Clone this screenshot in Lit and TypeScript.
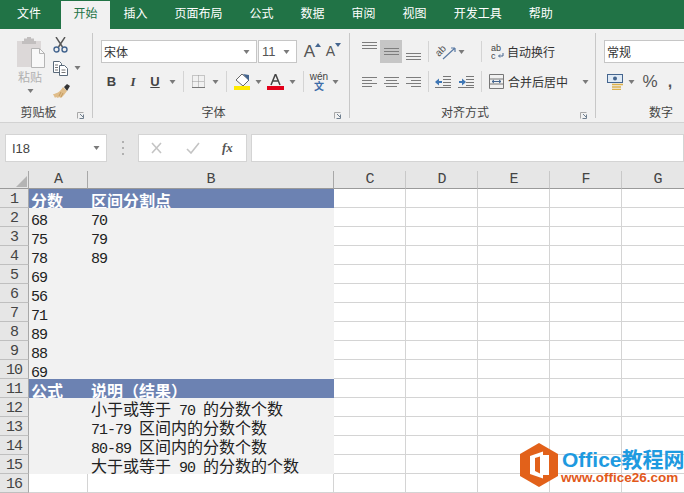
import { LitElement, html, svg, css } from "lit";
import { customElement } from "lit/decorators.js";

const TABS = ["文件", "开始", "插入", "页面布局", "公式", "数据", "审阅", "视图", "开发工具", "帮助"];
const COLS = ["A", "B", "C", "D", "E", "F", "G"];
const DATA: Record<number, [string, string]> = {
  1: ["分数", "区间分割点"], 2: ["68", "70"], 3: ["75", "79"], 4: ["78", "89"], 5: ["69", ""], 6: ["56", ""],
  7: ["71", ""], 8: ["89", ""], 9: ["88", ""], 10: ["69", ""], 11: ["公式", "说明（结果）"],
  12: ["", "小于或等于 70 的分数个数"], 13: ["", "71-79 区间内的分数个数"],
  14: ["", "80-89 区间内的分数个数"], 15: ["", "大于或等于 90 的分数的个数"],
};

const caret = html`<svg class="ic" width="7" height="4" viewBox="0 0 7 4"><path d="M.5 0h6L3.5 4z" fill="#7a7a7a"/></svg>`;
const launcher = html`<svg class="ic" width="8" height="7" viewBox="0 0 8 7"><path d="M.5 6.5V.5h6" fill="none" stroke="#a8a8a8"/><path d="M3 2l3 3M6.5 2.5v4h-4" fill="none" stroke="#6f7f8f"/></svg>`;
const sep = html`<i class="sep"></i>`;

function alignIcon(ws: [number, number][], step = 4) {
  const h = step * (ws.length - 1) + 1;
  return html`<svg class="ic" width="15" height=${h} viewBox="0 0 15 ${h}">${ws.map(([x, w], i) => svg`<rect x=${x} y=${i * step} width=${w} height="1" fill="#7d7d7d"/>`)}</svg>`;
}

@customElement("app-root")
export class AppRoot extends LitElement {
  static styles = css`
    :host { display: block; width: 684px; height: 493px; overflow: hidden; position: relative; background: #fff;
      font-family: "Noto Sans CJK SC", "Liberation Sans", sans-serif; color: #333; }
    .ic { display: block; flex: none; }
    .tabs { display: flex; height: 29px; background: #217346; color: #fff; font-size: 12px; gap: 2px; padding-left: 4.5px; box-sizing: border-box; align-items: stretch; padding-top: 1px; }
    .tab { padding: 0 12.5px; line-height: 24px; white-space: nowrap; }
    .tab.first { margin-right: 5.5px; }
    .tab.on { background: #f1f1f1; color: #217346; margin-right: -1px; }
    .ribbon { height: 94px; box-sizing: border-box; background: #f1f1f1; border-bottom: 1px solid #d2d2d2; display: flex; padding: 4px 0 4px; overflow: hidden; }
    .group { flex: none; display: flex; flex-direction: column; border-right: 1px solid #c8c8c8; position: relative; }
    .g1 { width: 92px; } .g2 { width: 256px; } .g3 { width: 245px; } .g4 { width: 145px; border: 0; }
    .body { flex: 1; min-height: 0; }
    .label { height: 10px; display: flex; align-items: center; font-size: 12px; color: #444; line-height: 10px; }
    .label b { flex: 1; text-align: center; font-weight: 400; margin-top: -2px; }
    .label span { width: 15px; flex: none; padding-top: 4px; }
    .clip { display: grid; grid-template-columns: 40px 40px; padding-left: 10px; }
    .paste { display: flex; flex-direction: column; align-items: center; padding-top: 4px; color: #b0b0b0; font-size: 12px; line-height: 16px; }
    .paste svg.ic:first-child { margin-bottom: 1px; }
    .paste .ic:last-child { margin-top: 4px; }
    .small { display: grid; grid-auto-rows: 23.5px; align-items: center; padding-left: 3px; }
    .small div { display: flex; align-items: center; gap: 6px; }
    .tools { padding: 7px 0 0 8px; display: grid; grid-template-rows: 23px 23px; row-gap: 7px; align-content: start; }
    .row { display: grid; grid-template-rows: 23px; align-items: center; justify-items: center; height: 23px; }
    .r-font1 { grid-template-columns: 156px 1px 39px 7px 17px 6px 13px; }
    .r-font2 { grid-template-columns: 21px 22px 22px 12px 10px 20px 14px 8px 24px 8px 26px 8px 14px 18px 14px; }
    .r-al { grid-template-columns: 22px 22px 22px 8px 45px 8px 100px; }
    .r-al2 { grid-template-columns: 22px 22px 22px 8px 22px 23px 8px 100px; }
    .r-num { grid-template-columns: 22px 10px 28px 12px; justify-content: start; }
    .r-one { justify-items: start; }
    .combo { background: #fff; border: 1px solid #c6c6c6; box-sizing: border-box; height: 23px; width: 100%; display: flex; align-items: center; justify-content: space-between; padding: 0 6px 0 2px; font-size: 12px; }
    .combo.size { padding-left: 3px; font-family: "Liberation Sans", sans-serif; font-size: 13px; color: #555; }
    .combo.num { width: 120px; padding-left: 2px; }
    .sep { display: block; width: 1px; height: 21px; background: #d4d4d4; }
    .hi { background: #c6c6c6; width: 22px; height: 23px; display: flex; align-items: center; justify-content: center; }
    .top { align-self: start; margin-top: 2px; }
    .bot { align-self: end; margin-bottom: 3px; }
    .flow { justify-self: start; display: flex; align-items: center; font-size: 12px; color: #333; white-space: nowrap; }
    .orient { padding-left: 4px; gap: 2px; }
    .wrap { padding-left: 6px; gap: 3px; margin-top: -1px; }
    .merge { padding-left: 4px; gap: 4px; }
    .merge .ic:last-child { margin-left: 10px; }
    .bold { font: 700 13px "Liberation Sans", sans-serif; color: #444; }
    .ital { font: italic 700 13px "Liberation Serif", serif; color: #444; }
    .ul { font: 700 13px "Liberation Sans", sans-serif; color: #444; text-decoration: underline; }
    .big { display: flex; align-items: flex-start; font: 17px/17px "Liberation Sans", sans-serif; color: #555; white-space: nowrap; }
    .big.sm { font-size: 14px; }
    .wen { font: 10px/9px "Liberation Sans", sans-serif; color: #444; text-align: center; }
    .wen span { display: block; font: 700 10px/10px "Noto Sans CJK SC", sans-serif; color: #3d6da8; }
    .pct { font: 17px "Liberation Sans", sans-serif; color: #555; }
    .comma { font: 700 16px "Liberation Sans", sans-serif; color: #555; line-height: 10px; }

    .fbar { height: 48px; box-sizing: border-box; background: #e6e6e6; padding: 11px 0 0 5px; display: flex; align-items: flex-start; }
    .fbox { background: #fff; border: 1px solid #d4d4d4; box-sizing: border-box; height: 28px; display: flex; align-items: center; }
    .name { width: 102px; padding: 0 6px; justify-content: space-between; font: 13px "Liberation Sans", sans-serif; color: #444; }
    .dots { width: 31px; height: 28px; display: flex; align-items: center; justify-content: center; }
    .btns { width: 109px; padding-left: 11px; gap: 22px; margin-right: 4px; }
    .fx { font: italic 700 13px "Liberation Serif", serif; color: #555; }
    .input { flex: 1; }

    .sheet { display: grid; grid-template-columns: 29px 59px 246px 72px 72px 72px 72px 72px; grid-template-rows: 18px repeat(16, 19px); }
    .cell { box-sizing: border-box; overflow: hidden; white-space: pre; font-size: 16px; line-height: 19px; padding: 1px 0 0 3px; color: #222; border-right: 1px solid #d4d4d4; border-bottom: 1px solid #d4d4d4; min-width: 0; }
    .hd { background: #e6e6e6; color: #444; text-align: center; padding: 1px 0 0; border-right: 1px solid #a8a8a8; border-bottom: 1px solid #9a9a9a; font: 15px/16px "Liberation Mono", monospace; letter-spacing: -1px; }
    .hd.rh { border-bottom: 1px solid #bfbfbf; padding-top: 3px; }
    .hd.lt { border-right-color: #c8c8c8; }
    .corner { padding: 5px 0 0 16px; }
    .fill { background: #f2f2f2; border: 0; }
    .blue { background: #6c82b2; border: 0; color: #fff; font-weight: 700; padding-top: 2px; }
    .ca { padding-left: 2px; }
    .lat { font: 15px "Liberation Mono", monospace; letter-spacing: -1px; }
    .blank { padding: 0; }

    .mark { position: absolute; left: 520px; top: 443px; display: flex; gap: 4px; align-items: flex-start; pointer-events: none; }
    .mtext { padding-top: 4px; white-space: nowrap; }
    .m1 { color: #1e9ae0; font: 700 21px/23px "Noto Sans CJK SC", "Liberation Sans", sans-serif; }
    .m1 span { font-family: "Liberation Sans", sans-serif; }
    .m2 { color: #e2591b; font: 700 13.5px/14px "Liberation Sans", sans-serif; margin-left: -1px; }
  `;

  private text(s: string) {
    return s.split(/([\x00-\x7f]+)/).filter(Boolean).map((p) =>
      /^[\x00-\x7f]/.test(p) ? html`<span class="lat">${p}</span>` : p);
  }

  private grid() {
    const out: unknown[] = [
      html`<div class="cell hd corner"><svg class="ic" width="11" height="11" viewBox="0 0 11 11"><path d="M11 0v11H0z" fill="#b4b4b4"/></svg></div>`,
      ...COLS.map((c, i) => html`<div class="cell hd ${i > 1 ? "lt" : ""}">${c}</div>`),
    ];
    for (let r = 1; r <= 16; r++) {
      out.push(html`<div class="cell hd rh">${r}</div>`);
      const d = DATA[r];
      const kind = r === 1 || r === 11 ? "blue" : r === 16 ? "" : "fill";
      out.push(html`<div class="cell ca ${kind}">${d ? this.text(d[0]) : ""}</div>`);
      out.push(html`<div class="cell ${kind}">${d ? this.text(d[1]) : ""}</div>`);
      for (let c = 0; c < 5; c++) out.push(html`<div class="cell blank"></div>`);
    }
    return out;
  }

  render() {
    return html`
      <div class="tabs">${TABS.map((t, i) => html`<div class="tab ${i === 0 ? "first" : ""} ${i === 1 ? "on" : ""}">${t}</div>`)}</div>
      <div class="ribbon">
        <section class="group g1">
          <div class="body clip">
            <div class="paste">
              <svg class="ic" width="30" height="31" viewBox="0 0 30 31">
                <rect x="2" y="4" width="24" height="26" fill="#dcd8d8"/>
                <path d="M9 4V1.500h3V0h4v1.500h3V4h2v3H7V4z" fill="#c2bfbf"/>
                <path d="M16.500 11.500h8l5 5v14h-13z" fill="#f8f8f8" stroke="#b5b5b5"/>
                <path d="M24.500 11.500v5h5" fill="none" stroke="#b5b5b5"/>
              </svg>
              <span>粘贴</span>
              ${caret}
            </div>
            <div class="small">
              <div><svg class="ic" width="15" height="16" viewBox="0 0 15 16">
                <path d="M3 0l6.500 10M12 0L5.500 10" stroke="#555" stroke-width="1.400" fill="none"/>
                <circle cx="3.500" cy="12.500" r="2.500" fill="none" stroke="#44658f" stroke-width="1.400"/>
                <circle cx="11.500" cy="12.500" r="2.500" fill="none" stroke="#44658f" stroke-width="1.400"/>
              </svg></div>
              <div><svg class="ic" width="15" height="15" viewBox="0 0 15 15">
                <path d="M.5.500h6l2 2v9h-8z" fill="#fff" stroke="#5a6a7a"/>
                <path d="M6.500 4.500h5l3 3v7h-8z" fill="#fff" stroke="#5a6a7a"/>
                <path d="M2 4h3M2 6.500h3M2 9h3M8.500 9h4M8.500 11.500h4" stroke="#777"/>
              </svg>${caret}</div>
              <div><svg class="ic" width="17" height="15" viewBox="0 0 17 15">
                <path d="M11 3l3-3 3 2-3 5z" fill="#333"/>
                <path d="M10 3l4 4-3 4-3 3-2-1-1 1-2-1-1 1-2-4c3 0 7-2 10-7z" fill="#e0bd8a"/>
                <path d="M8 8l-2 4M10 9l-2 4" stroke="#c29a60"/>
              </svg></div>
            </div>
          </div>
          <div class="label"><b>剪贴板</b><span>${launcher}</span></div>
        </section>

        <section class="group g2">
          <div class="body tools">
            <div class="row r-font1">
              <div class="combo">宋体 ${caret}</div><i></i>
              <div class="combo size">11 ${caret}</div><i></i>
              <div class="big">A<svg class="ic" width="6" height="4" viewBox="0 0 6 4"><path d="M0 4l3-4 3 4z" fill="#44658f"/></svg></div><i></i>
              <div class="big sm">A<svg class="ic" width="6" height="4" viewBox="0 0 6 4"><path d="M0 0l3 4 3-4z" fill="#44658f"/></svg></div>
            </div>
            <div class="row r-font2">
              <span class="bold">B</span><span class="ital">I</span><span class="ul">U</span>${caret}${sep}
              <svg class="ic" width="13" height="13" viewBox="0 0 13 13"><path d="M.5.500h12v12H.5zM6.500.500v12M.5 6.500h12" fill="none" stroke="#999" stroke-dasharray="1 1"/><path d="M0 12.500h13" stroke="#777"/></svg>
              ${caret}${sep}
              <svg class="ic" width="17" height="16" viewBox="0 0 17 16"><path d="M8 0l7 6-6 6-7-6z" fill="#fff" stroke="#666"/><path d="M9 0l6 1v6z" fill="#44658f"/><rect y="12" width="16" height="4" fill="#ffea00"/></svg>
              ${caret}
              <svg class="ic" width="17" height="16" viewBox="0 0 17 16"><path d="M4 11L8.500 0 13 11M6 7h5" fill="none" stroke="#444" stroke-width="1.500"/><rect y="12" width="17" height="4" fill="#e2001a"/></svg>
              ${caret}${sep}
              <div class="wen">wén<span>文</span></div>
              ${caret}
            </div>
          </div>
          <div class="label"><b>字体</b><span>${launcher}</span></div>
        </section>

        <section class="group g3">
          <div class="body tools">
            <div class="row r-al">
              <div class="top">${alignIcon([[0, 15], [0, 15], [0, 15]], 3)}</div>
              <div class="hi">${alignIcon([[0, 15], [0, 15], [0, 15]], 3)}</div>
              <div class="bot">${alignIcon([[0, 15], [0, 15], [0, 15]], 3)}</div>
              ${sep}
              <div class="flow orient"><svg class="ic" width="20" height="16" viewBox="0 0 20 16"><text x="0" y="10" font-size="10" font-family="Liberation Sans" fill="#555" transform="rotate(-45 5 8)">ab</text><path d="M7 15L19 4M19 4h-4M19 4v4" fill="none" stroke="#5a7ba5" stroke-width="1.200"/></svg>${caret}</div>
              ${sep}
              <div class="flow wrap"><svg class="ic" width="13" height="15" viewBox="0 0 13 15"><text x="0" y="7" font-size="9" font-family="Liberation Sans" fill="#444">ab</text><text x="0" y="15" font-size="9" font-family="Liberation Sans" fill="#444">c</text><path d="M12 9v3H8M9 10.500L7.500 12 9 13.500" fill="none" stroke="#44658f"/></svg>自动换行</div>
            </div>
            <div class="row r-al2">
              ${alignIcon([[0, 15], [0, 10], [0, 15], [0, 10]], 3)}
              ${alignIcon([[0, 15], [2, 11], [0, 15], [2, 11]], 3)}
              ${alignIcon([[0, 15], [5, 10], [0, 15], [5, 10]], 3)}
              ${sep}
              <svg class="ic" width="16" height="12" viewBox="0 0 16 12"><path d="M1 6h6" stroke="#3f77b5" stroke-width="2"/><path d="M0 6l4-3.500v7z" fill="#3f77b5"/><path d="M8 .5h8M8 3.500h8M8 6.500h8M8 9.500h8M0 11.500h16" stroke="#777"/></svg>
              <svg class="ic" width="16" height="12" viewBox="0 0 16 12"><path d="M1 6h5" stroke="#3f77b5" stroke-width="2"/><path d="M8 6L4 2.500v7z" fill="#3f77b5"/><path d="M8 .5h8M8 3.500h8M8 6.500h8M8 9.500h8M0 11.500h16" stroke="#777"/></svg>
              ${sep}
              <div class="flow merge"><svg class="ic" width="15" height="15" viewBox="0 0 15 15"><path d="M.5.500h14v14H.5zM.5 5h14M.5 10h14" fill="none" stroke="#777"/><path d="M3 7.500h9M3 7.500l2-1.500M3 7.500l2 1.500M12 7.500l-2-1.500M12 7.500l-2 1.500" fill="none" stroke="#44658f"/></svg>合并后居中${caret}</div>
            </div>
          </div>
          <div class="label"><b>对齐方式</b><span>${launcher}</span></div>
        </section>

        <section class="group g4">
          <div class="body tools">
            <div class="row r-one"><div class="combo num">常规</div></div>
            <div class="row r-num">
              <svg class="ic" width="16" height="16" viewBox="0 0 16 16"><rect x=".5" y=".5" width="15" height="8" fill="#dfeaf5" stroke="#44658f"/><circle cx="8" cy="4.500" r="2" fill="#44658f"/><path d="M5 10.500h11M5 13h9M5 15.500h9" stroke="#dcb14c" stroke-width="1.500"/></svg>
              ${caret}<span class="pct">%</span><span class="comma">,</span>
            </div>
          </div>
          <div class="label"><b>数字</b><span></span></div>
        </section>
      </div>

      <div class="fbar">
        <div class="fbox name"><span>I18</span>${caret}</div>
        <div class="dots"><svg class="ic" width="2" height="14" viewBox="0 0 2 14"><path d="M0 0h2v2H0zM0 6h2v2H0zM0 12h2v2H0z" fill="#b0b0b0"/></svg></div>
        <div class="fbox btns">
          <svg class="ic" width="14" height="12" viewBox="0 0 14 12"><path d="M2 1l9 10M11 1L2 11" stroke="#c4c4c4" stroke-width="1.600"/></svg>
          <svg class="ic" width="14" height="12" viewBox="0 0 14 12"><path d="M1 7l4 4 8-10" fill="none" stroke="#c4c4c4" stroke-width="1.600"/></svg>
          <span class="fx">fx</span>
        </div>
        <div class="fbox input"></div>
      </div>

      <div class="sheet">${this.grid()}</div>

      <div class="mark">
        <svg class="ic" width="38" height="44" viewBox="0 0 38 44">
          <path d="M19 0l19 11v22L19 44 0 33V11z" fill="#e2611a"/>
          <path d="M10 13l13-4.500v27L10 31z" fill="#fff"/>
          <path d="M23 12h6v20h-6z" fill="#fff"/>
          <path d="M15 15l5-1.500v17L15 28z" fill="#e2611a"/>
        </svg>
        <div class="mtext">
          <div class="m1"><span>Office</span>教程网</div>
          <div class="m2">www.office26.com</div>
        </div>
      </div>
    `;
  }
}
